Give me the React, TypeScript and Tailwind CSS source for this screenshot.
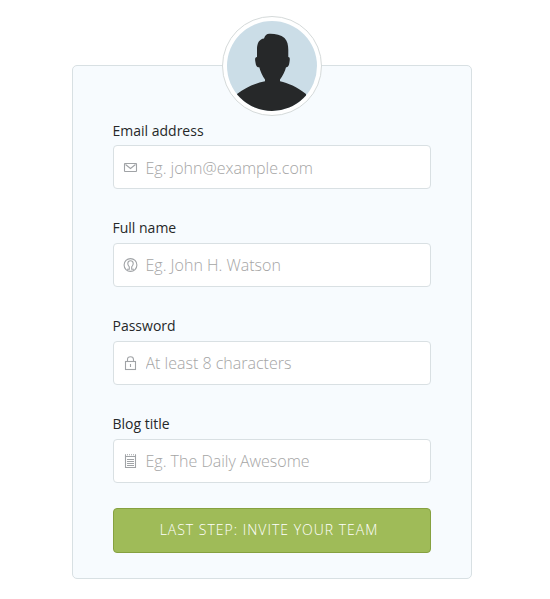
import React from "react";

const iconProps = {
  width: 15,
  height: 16,
  viewBox: "0 0 15 16",
  fill: "none",
  stroke: "#a0a3a6",
  strokeWidth: 1.1,
} as const;

const MailIcon = () => (
  <svg {...iconProps}>
    <rect x="1.5" y="4.5" width="12" height="8" rx="0.5" />
    <path d="M2.5 5.5l5 4 5-4" />
  </svg>
);

const UserIcon = () => (
  <svg {...iconProps}>
    <circle cx="7.5" cy="8" r="6.4" />
    <path d="M4 12.2h2.3V9.9C5.1 8.7 4.7 7.3 4.8 6.2 4.9 4.5 5.9 3.7 7.5 3.7s2.6.8 2.7 2.5c.1 1.1-.3 2.5-1.5 3.7v2.3H11" />
  </svg>
);

const LockIcon = () => (
  <svg {...iconProps}>
    <rect x="2.5" y="6.5" width="10" height="8" />
    <path d="M4.5 6.5V4.6C4.5 2.8 5.6 1.7 7.5 1.7s3 1.1 3 2.9v1.9M7.5 9v3" />
  </svg>
);

const NoteIcon = () => (
  <svg {...iconProps}>
    <path d="M2.5 2v12.5h10V2M2 3.5h11M4 6.5h7M4 8.5h7M4 10.5h7M4 12.5h7" />
    <path d="M2 1.8h11" strokeDasharray="1 1" />
  </svg>
);

const Avatar = () => (
  <svg width="90" height="90" viewBox="0 0 90 90" className="block rounded-full">
    <rect width="90" height="90" fill="#cbdde7" />
    <path
      fill="#262829"
      d="M37 17.5C38 14 40 12.5 43 12.8C48 12.7 54 14 57.5 17C60.5 20 61.2 24 61.3 29V36C63 36 63 38 62.5 41C62 45 61 46.3 59 46.2C58.3 50 55.5 55 53 58.5V60.3C61 62 70 66 79 73V90H10V73C19 66 29 62 38 60.3V58.5C35.5 55 33.2 50 32.3 46.2C29.8 46.4 29 45 28.4 41C27.8 38 28 36 30 36V29C29.8 22 32.5 18 37 17.5Z"
    />
  </svg>
);

type FieldProps = {
  label: string;
  placeholder: string;
  icon: React.ReactNode;
  type?: string;
};

const Field = ({ label, placeholder, icon, type = "text" }: FieldProps) => (
  <label className="group flex flex-col">
    <span className="-ml-[0.5px] mb-[5px] h-5 text-sm leading-5 text-[#262829] group-first:mb-1 group-first:mt-px">
      {label}
    </span>
    <span className="flex h-11 items-center gap-[7.5px] rounded border border-[#d9e0e3] bg-white pl-[9px]">
      {icon}
      <input
        type={type}
        placeholder={placeholder}
        className="h-6 min-w-0 flex-1 bg-transparent text-base font-light outline-none group-first:mt-0.5 placeholder:text-[#a5a5a5] placeholder:opacity-100"
      />
    </span>
  </label>
);

export default function App() {
  return (
    <main className="flex h-[599px] flex-col bg-white pl-[72px] pt-[65px] font-['Open_Sans',sans-serif]">
      <form className="flex h-[514px] w-[400px] flex-col rounded-[5px] border border-[#d8e0e3] bg-[#f7fbfe] px-10">
        <div className="z-10 -mt-[50px] h-[100px] w-[100px] self-center rounded-full border border-[#d5dada] bg-white p-1">
          <Avatar />
        </div>
        <div className="mt-1 flex flex-col gap-[29px]">
          <Field label="Email address" placeholder="Eg. john@example.com" icon={<MailIcon />} />
          <Field label="Full name" placeholder="Eg. John H. Watson" icon={<UserIcon />} />
          <Field label="Password" placeholder="At least 8 characters" icon={<LockIcon />} type="password" />
          <Field label="Blog title" placeholder="Eg. The Daily Awesome" icon={<NoteIcon />} />
        </div>
        <button
          type="button"
          className="mt-[25px] h-[45px] rounded border border-[#86a140] bg-[#9fbb58] pb-0.5 pr-1.5 text-sm font-light tracking-[1px] text-white"
        >
          LAST STEP: INVITE YOUR TEAM
        </button>
      </form>
    </main>
  );
}
